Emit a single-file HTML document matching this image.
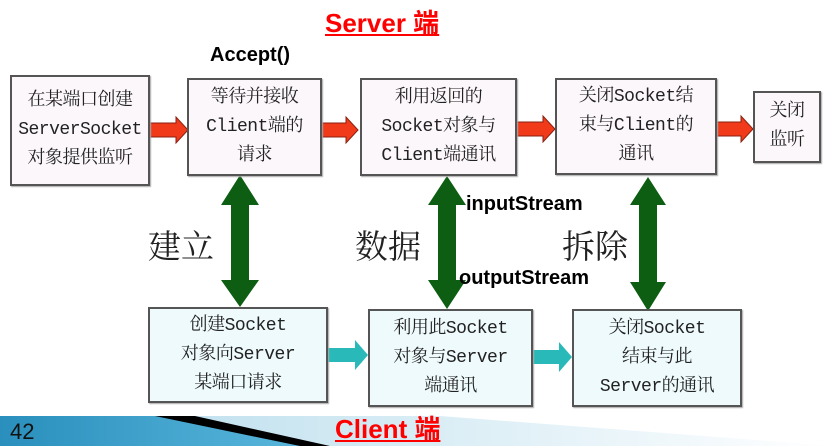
<!DOCTYPE html>
<html><head><meta charset="utf-8"><style>
html,body{margin:0;padding:0;background:#fff;}
body{width:835px;height:446px;position:relative;overflow:hidden;font-family:"Liberation Mono","Noto Serif CJK SC",monospace;}
.b{position:absolute;box-sizing:border-box;border:2px solid #555;background:#fbf7fb;display:flex;align-items:center;justify-content:center;text-align:center;font-size:18px;line-height:29px;color:#222;box-shadow:1px 1px 1px #aaa;letter-spacing:-0.5px;}
.c{background:#eefafc;}
.t{position:absolute;white-space:nowrap;}
.lab{font-family:"Liberation Sans","Noto Sans CJK SC",sans-serif;font-weight:bold;color:#000;font-size:20px;}
.big{font-family:"Liberation Serif","Noto Serif CJK SC",serif;font-size:33px;color:#222;}
.red{font-family:"Liberation Sans","Noto Sans CJK SC",sans-serif;font-weight:bold;color:#f00;font-size:26px;text-decoration:underline;}
</style></head><body>
<svg width="835" height="446" style="position:absolute;left:0;top:0">
<defs><linearGradient id="g" x1="0" x2="1"><stop offset="0" stop-color="#2a8fbd"/><stop offset="1" stop-color="#5ab7dc"/></linearGradient>
<linearGradient id="g2" x1="0" x2="1"><stop offset="0" stop-color="#bfe0ee"/><stop offset="1" stop-color="#ffffff"/></linearGradient></defs>
<polygon points="150,416 440,416 835,446 300,446" fill="url(#g2)"/>
<polygon points="0,416 160,416 310,446 0,446" fill="url(#g)"/>
<polygon points="155,416 195,416 330,446 300,446" fill="#000"/>
<g fill="#f03a1a" stroke="#8a2010" stroke-width="1">
<polygon points="150,123 176,123 176,117 188,130 176,143 176,137 150,137"/>
<polygon points="322,123 346,123 346,117 358,130 346,143 346,137 322,137"/>
<polygon points="517,122 543,122 543,116 555,129 543,142 543,136 517,136"/>
<polygon points="717,122 741,122 741,116 753,129 741,142 741,136 717,136"/>
</g>
<g fill="#2ab9b9">
<polygon points="328,348 355,348 355,340 368,355 355,370 355,362 328,362"/>
<polygon points="533,350 559,350 559,342 572,357 559,372 559,364 533,364"/>
</g>
<g fill="#0d5e12">
<polygon points="240,175 259,205 249,205 249,280 259,280 240,307 221,280 231,280 231,205 221,205"/>
<polygon points="447,176 466,205 456,205 456,280 466,280 447,309 428,280 438,280 438,205 428,205"/>
<polygon points="648,177 666,205 657,205 657,282 666,282 648,311 630,282 639,282 639,205 630,205"/>
</g>
</svg>
<div class="b" style="left:10px;top:75px;width:140px;height:111px">在某端口创建<br>ServerSocket<br>对象提供监听</div>
<div class="b" style="left:187px;top:78px;width:135px;height:98px">等待并接收<br>Client端的<br>请求</div>
<div class="b" style="left:360px;top:78px;width:157px;height:98px">利用返回的<br>Socket对象与<br>Client端通讯</div>
<div class="b" style="left:555px;top:78px;width:162px;height:97px">关闭Socket结<br>束与Client的<br>通讯</div>
<div class="b" style="left:753px;top:91px;width:68px;height:72px">关闭<br>监听</div>
<div class="b c" style="left:148px;top:307px;width:180px;height:96px">创建Socket<br>对象向Server<br>某端口请求</div>
<div class="b c" style="left:368px;top:309px;width:165px;height:98px">利用此Socket<br>对象与Server<br>端通讯</div>
<div class="b c" style="left:572px;top:309px;width:170px;height:98px">关闭Socket<br>结束与此<br>Server的通讯</div>
<div class="t red" style="left:325px;top:3px">Server 端</div>
<div class="t red" style="left:335px;top:409px">Client 端</div>
<div class="t lab" style="left:210px;top:44px">Accept()</div>
<div class="t lab" style="left:466px;top:193px">inputStream</div>
<div class="t lab" style="left:459px;top:267px">outputStream</div>
<div class="t big" style="left:148px;top:221px">建立</div>
<div class="t big" style="left:355px;top:221px">数据</div>
<div class="t big" style="left:562px;top:221px">拆除</div>
<div class="t" style="left:10px;top:419px;font-family:'Liberation Sans',sans-serif;font-size:22px;color:#111">42</div>
</body></html>
